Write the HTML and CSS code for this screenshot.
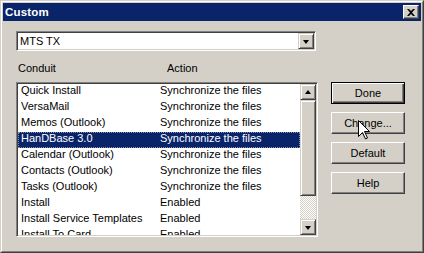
FILE: index.html
```html
<!DOCTYPE html>
<html lang="en">
<head>
    <meta charset="UTF-8">
    <title>Custom</title>
    <link rel="stylesheet" href="styles.css">
</head>
<body>
    <div class="window">
        <div class="frame">
            <div class="titlebar">
                <span class="title">Custom</span>
                <span class="close">
                    <svg width="8" height="7" viewBox="0 0 8 7"><path d="M0 0h2l2 2 2-2h2L5 3.5 8 7H6L4 5 2 7H0l3-3.5z" fill="#000"/></svg>
                </span>
            </div>
            <div class="body">
                <div class="left">
                    <div class="combo">
                        <span class="combo-text">MTS TX</span>
                        <span class="sbtn"><i class="tri-down"></i></span>
                    </div>
                    <div class="headers">
                        <span class="h-conduit">Conduit</span>
                        <span>Action</span>
                    </div>
                    <div class="listbox">
                        <div class="rows">
                            <div class="row"><span class="c1">Quick Install</span><span>Synchronize the files</span></div>
                            <div class="row"><span class="c1">VersaMail</span><span>Synchronize the files</span></div>
                            <div class="row"><span class="c1">Memos (Outlook)</span><span>Synchronize the files</span></div>
                            <div class="row selected"><span class="c1">HanDBase 3.0</span><span>Synchronize the files</span></div>
                            <div class="row"><span class="c1">Calendar (Outlook)</span><span>Synchronize the files</span></div>
                            <div class="row"><span class="c1">Contacts (Outlook)</span><span>Synchronize the files</span></div>
                            <div class="row"><span class="c1">Tasks (Outlook)</span><span>Synchronize the files</span></div>
                            <div class="row"><span class="c1">Install</span><span>Enabled</span></div>
                            <div class="row"><span class="c1">Install Service Templates</span><span>Enabled</span></div>
                            <div class="row"><span class="c1">Install To Card</span><span>Enabled</span></div>
                        </div>
                        <div class="scrollbar">
                            <span class="sbtn"><i class="tri-up"></i></span>
                            <span class="thumb"></span>
                            <span class="track"></span>
                            <span class="sbtn"><i class="tri-down"></i></span>
                        </div>
                    </div>
                </div>
                <div class="buttons">
                    <button class="btn default">Done</button>
                    <button class="btn change">Change...
                        <svg class="cursor" width="13" height="20" viewBox="0 0 13 20"><path d="M0.5 0.5V16.5L4.5 12.5L7.5 19L9.5 18L6.5 11.5H11.5Z" fill="#fff" stroke="#000" stroke-linejoin="miter"/></svg>
                    </button>
                    <button class="btn">Default</button>
                    <button class="btn">Help</button>
                </div>
            </div>
        </div>
    </div>
</body>
</html>
```

FILE: styles.css
```css
body {
    margin: 0;
    font-family: "Liberation Sans", Arial, sans-serif;
    font-size: 11px;
    color: #000;
    background: #d4d0c8;
}
.window {
    width: 424px;
    height: 253px;
    box-sizing: border-box;
    border: 1px solid;
    border-color: #d4d0c8 #404040 #404040 #d4d0c8;
}
.frame {
    height: 100%;
    box-sizing: border-box;
    border: 1px solid;
    border-color: #fff #808080 #808080 #fff;
    padding: 1px;
    background: #d4d0c8;
}
.titlebar {
    height: 18px;
    background: #0a246a;
    display: flex;
    align-items: center;
    justify-content: space-between;
    padding: 0 2px 0 2px;
}
.title {
    color: #fff;
    font-weight: bold;
    font-size: 11.5px;
    letter-spacing: 0.2px;
}
.close {
    width: 16px;
    height: 14px;
    box-sizing: border-box;
    background: #d4d0c8;
    border: 1px solid;
    border-color: #fff #404040 #404040 #fff;
    box-shadow: inset -1px -1px #808080;
    display: flex;
    align-items: center;
    justify-content: center;
    padding-right: 1px;
}
.body {
    display: flex;
    padding: 10px 0 0 13px;
}
.left {
    width: 302px;
}
.combo {
    width: 300px;
    height: 20px;
    box-sizing: border-box;
    border: 1px solid;
    border-color: #808080 #fff #fff #808080;
    box-shadow: inset 1px 1px #404040, inset -1px -1px #d4d0c8;
    padding: 1px;
    display: flex;
}
.combo-text {
    flex: 1;
    background: #fff;
    line-height: 16px;
    padding-left: 2px;
}
.sbtn {
    width: 16px;
    height: 16px;
    box-sizing: border-box;
    background: #d4d0c8;
    border: 1px solid;
    border-color: #d4d0c8 #404040 #404040 #d4d0c8;
    box-shadow: inset 1px 1px #fff, inset -1px -1px #808080;
    display: flex;
    align-items: center;
    justify-content: center;
}
.tri-down, .tri-up {
    width: 0;
    height: 0;
    border-left: 3.5px solid transparent;
    border-right: 3.5px solid transparent;
}
.tri-down {
    border-top: 4px solid #000;
    margin-top: 1px;
}
.tri-up {
    border-bottom: 4px solid #000;
    margin-top: -1px;
}
.headers {
    display: flex;
    margin-top: 11px;
    height: 13px;
    line-height: 13px;
    padding-left: 2px;
}
.h-conduit {
    width: 149px;
}
.listbox {
    margin-top: 7px;
    width: 302px;
    height: 155px;
    box-sizing: border-box;
    border: 1px solid;
    border-color: #808080 #fff #fff #808080;
    box-shadow: inset 1px 1px #404040, inset -1px -1px #d4d0c8;
    padding: 1px;
    display: flex;
}
.rows {
    flex: 1;
    background: #fff;
    overflow: hidden;
}
.row {
    height: 16px;
    line-height: 13px;
    display: flex;
    padding-left: 3px;
    white-space: nowrap;
}
.row .c1 {
    width: 139px;
}
.row.selected {
    background: #0a246a;
    color: #fff;
    outline: 1px dotted #8c8ca8;
    outline-offset: -1px;
}
.scrollbar {
    width: 16px;
    display: flex;
    flex-direction: column;
}
.thumb {
    height: 96px;
    box-sizing: border-box;
    border: 1px solid;
    border-color: #d4d0c8 #404040 #404040 #d4d0c8;
    box-shadow: inset 1px 1px #fff, inset -1px -1px #808080;
    background: #d4d0c8;
}
.track {
    flex: 1;
    background-image: conic-gradient(#fff 25%, #d4d0c8 0 50%, #fff 0 75%, #d4d0c8 0);
    background-size: 2px 2px;
}
.buttons {
    display: flex;
    flex-direction: column;
    gap: 8px;
    margin: 51px 0 0 13px;
}
.btn {
    position: relative;
    width: 74px;
    height: 22px;
    box-sizing: border-box;
    font-family: inherit;
    font-size: 11px;
    color: #000;
    background: #d4d0c8;
    border: 1px solid;
    border-color: #fff #404040 #404040 #fff;
    box-shadow: inset -1px -1px #808080;
    padding: 0;
}
.btn.default {
    border: 1px solid #000;
    box-shadow: inset 1px 1px #fff, inset -1px -1px #404040, inset -2px -2px #808080;
}
.cursor {
    position: absolute;
    left: 26px;
    top: 7px;
}
```
